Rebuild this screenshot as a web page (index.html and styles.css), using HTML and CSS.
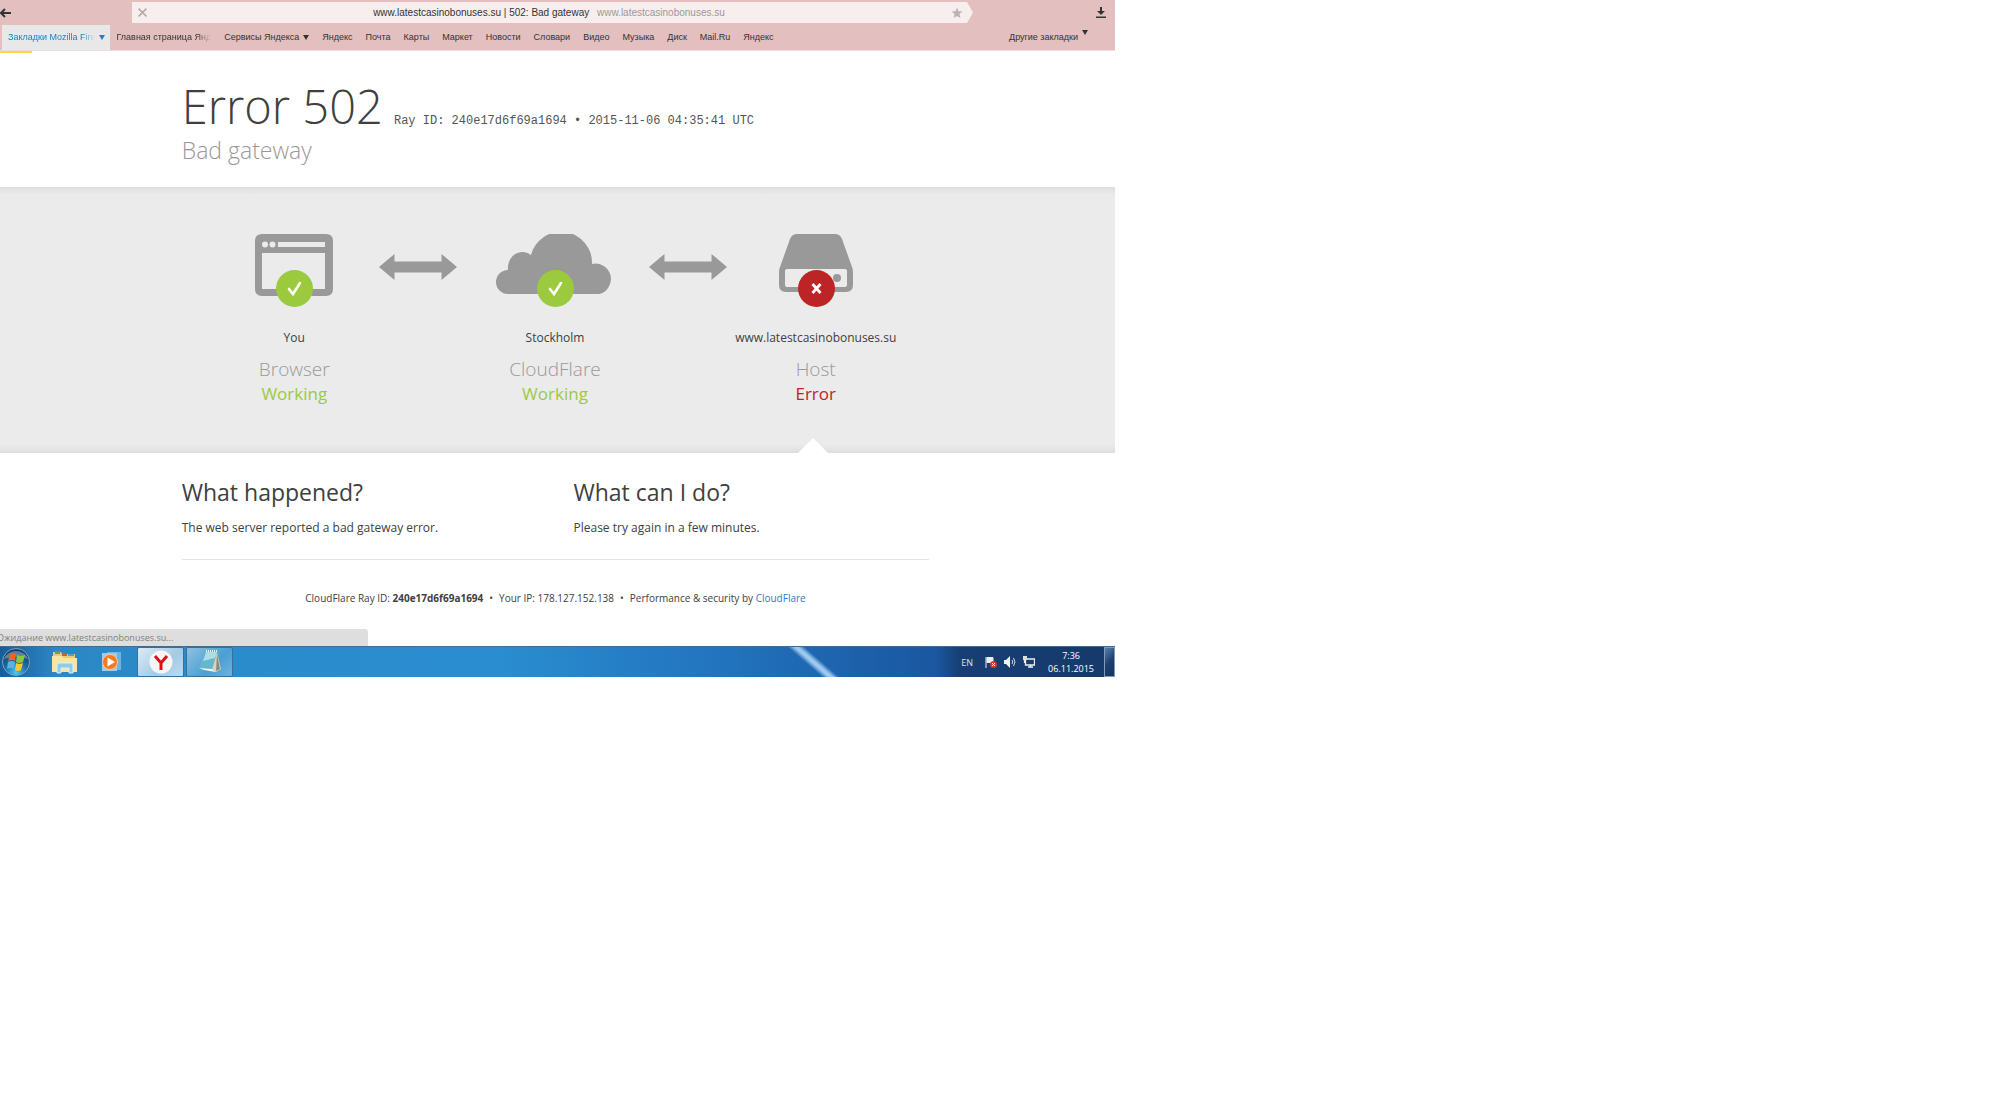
FILE: index.html
```
<!DOCTYPE html>
<html lang="en">

<head>
  <meta charset="UTF-8">
  <meta name="viewport" content="width=device-width, initial-scale=1.0">
  <title>www.latestcasinobonuses.su | 502: Bad gateway</title>
  <link rel="stylesheet" href="styles.css">
</head>

<body>
  <div class="screen">

    <header class="browser">
      <div class="toolbar">
        <button class="icon-button back" aria-label="Back">
          <svg width="12" height="10" viewBox="0 0 12 10"><path d="M5 1L1 5l4 4M1 5h10" fill="none" stroke="#333" stroke-width="2"/></svg>
        </button>
        <div class="address">
          <button class="icon-button" aria-label="Stop">
            <svg width="9" height="9" viewBox="0 0 8 8"><path d="M.5.5l7 7M7.500.5l-7 7" fill="none" stroke="#b3adad" stroke-width="1.500"/></svg>
          </button>
          <p class="address-text">www.latestcasinobonuses.su | 502: Bad gateway <span>www.latestcasinobonuses.su</span></p>
          <button class="icon-button" aria-label="Bookmark">
            <svg width="12" height="12" viewBox="0 0 12 12"><path d="M6 .5l1.500 3.800 4 .2-3.100 2.600 1 4L6 8.900l-3.400 2.200 1-4L.5 4.500l4-.2z" fill="#b9b3b3"/></svg>
          </button>
        </div>
        <button class="icon-button" aria-label="Downloads">
          <svg width="10" height="12" viewBox="0 0 10 12"><path d="M4 0h2v4h3L5 8 1 4h3zM0 9.500h10V11H0z" fill="#333"/></svg>
        </button>
      </div>
      <nav class="bookmarks">
        <a class="bookmark active" href="#"><span class="cut">Закладки Mozilla Fire</span><i class="caret"></i></a>
        <a class="bookmark" href="#"><span class="cut">Главная страница Янд</span></a>
        <a class="bookmark" href="#">Сервисы Яндекса<i class="caret"></i></a>
        <a class="bookmark" href="#">Яндекс</a>
        <a class="bookmark" href="#">Почта</a>
        <a class="bookmark" href="#">Карты</a>
        <a class="bookmark" href="#">Маркет</a>
        <a class="bookmark" href="#">Новости</a>
        <a class="bookmark" href="#">Словари</a>
        <a class="bookmark" href="#">Видео</a>
        <a class="bookmark" href="#">Музыка</a>
        <a class="bookmark" href="#">Диск</a>
        <a class="bookmark" href="#">Mail.Ru</a>
        <a class="bookmark" href="#">Яндекс</a>
        <a class="bookmark other" href="#">Другие закладки<i class="caret"></i></a>
      </nav>
    </header>

    <main class="page">
      <div class="progress"></div>
      <div class="wrapper title">
        <h1>Error 502</h1>
        <span class="ray">Ray ID: 240e17d6f69a1694 &bull; 2015-11-06 04:35:41 UTC</span>
        <h2>Bad gateway</h2>
      </div>

      <section class="status">
        <div class="status-grid">
          <div class="status-item">
            <div class="figure">
              <svg width="78" height="62" viewBox="0 0 78 62">
                <path fill="#999" fill-rule="evenodd" d="M7 0h64q7 0 7 7v48q0 7-7 7H7q-7 0-7-7V7q0-7 7-7zM7 19v36h63V19zM23 8v5h47V8z"/>
                <circle cx="10" cy="10.500" r="3" fill="#ebebeb"/>
                <circle cx="17.500" cy="10.500" r="3" fill="#ebebeb"/>
              </svg>
              <svg class="badge" width="37" height="37" viewBox="0 0 37 37"><circle cx="18.500" cy="18.500" r="18.500" fill="#9bca3e"/><path d="M13 19l4 5 7-11" fill="none" stroke="#fff" stroke-width="2.600" stroke-linecap="round"/></svg>
            </div>
            <span class="where">You</span>
            <h3>Browser</h3>
            <span class="state ok">Working</span>
          </div>

          <div class="status-item">
            <svg class="arrow" width="78" height="26" viewBox="0 0 78 26"><path d="M0 13L15.500 0v7.500h47V0L78 13 62.500 26v-7.500h-47V26z" fill="#999"/></svg>
            <div class="figure">
              <svg width="118" height="60" viewBox="0 0 118 60"><path d="M12 60a12 12 0 0 1 0-24q-.5-4 1-8a14 14 0 0 1 22-7A31 31 0 0 1 96 30a15.200 15.200 0 1 1 7 30z" fill="#999"/></svg>
              <svg class="badge" width="37" height="37" viewBox="0 0 37 37"><circle cx="18.500" cy="18.500" r="18.500" fill="#9bca3e"/><path d="M13 19l4 5 7-11" fill="none" stroke="#fff" stroke-width="2.600" stroke-linecap="round"/></svg>
            </div>
            <span class="where">Stockholm</span>
            <h3>CloudFlare</h3>
            <span class="state ok">Working</span>
          </div>

          <div class="status-item">
            <svg class="arrow arrow-host" width="78" height="26" viewBox="0 0 78 26"><path d="M0 13L15.500 0v7.500h47V0L78 13 62.500 26v-7.500h-47V26z" fill="#999"/></svg>
            <div class="figure">
              <svg width="74" height="58" viewBox="0 0 74 58">
                <path fill="#999" fill-rule="evenodd" d="M18 0h38q5 0 7 5l10 28q1 2 1 5v13q0 7-7 7H7q-7 0-7-7V38q0-3 1-5L11 5q2-5 7-5zM8 35q-2 0-2 2v14q0 2 2 2h58q2 0 2-2V37q0-2-2-2z"/>
                <circle cx="58" cy="44" r="4" fill="#999"/>
              </svg>
              <svg class="badge" width="37" height="37" viewBox="0 0 37 37"><circle cx="18.500" cy="18.500" r="18.500" fill="#bd2426"/><path d="M14.500 14l8 9M22.500 14l-8 9" fill="none" stroke="#fff" stroke-width="2.800"/></svg>
            </div>
            <span class="where">www.latestcasinobonuses.su</span>
            <h3>Host</h3>
            <span class="state error">Error</span>
            <div class="notch"></div>
          </div>
        </div>
      </section>

      <div class="wrapper">
        <div class="columns">
          <section>
            <h2>What happened?</h2>
            <p>The web server reported a bad gateway error.</p>
          </section>
          <section>
            <h2>What can I do?</h2>
            <p>Please try again in a few minutes.</p>
          </section>
        </div>
        <footer class="footer">
          <span>CloudFlare Ray ID: <strong>240e17d6f69a1694</strong></span>
          <span>&bull;</span>
          <span>Your IP: 178.127.152.138</span>
          <span>&bull;</span>
          <span>Performance &amp; security by <a href="#">CloudFlare</a></span>
        </footer>
      </div>
      <div class="loading"><span>Ожидание www.latestcasinobonuses.su...</span></div>
    </main>

    <div class="taskbar">
      <button class="start" aria-label="Start">
        <svg width="30" height="30" viewBox="0 0 30 30">
          <defs><radialGradient id="orb" cx=".5" cy=".9" r=".8"><stop offset="0" stop-color="#3fd0f5"/><stop offset=".5" stop-color="#1b6fae"/><stop offset="1" stop-color="#123f6d"/></radialGradient></defs>
          <circle cx="15" cy="15" r="13.500" fill="url(#orb)" stroke="#7fa3bd"/>
          <path d="M3 12a12.500 11 0 0 1 24 0q-12-5-24 0z" fill="#fff" opacity=".3"/>
          <path d="M9 7q3-2 6 0l-1 7q-3-2-7 0z" fill="#e9652b"/>
          <path d="M16 8q3 2 8 0l-2 7q-4 2-7 0z" fill="#8dc63f"/>
          <path d="M7 15q3-2 7 0l-1 7q-3-2-7 0z" fill="#54b4ea"/>
          <path d="M15 16q3 2 7 0l-2 7q-3 2-6 0z" fill="#fbc62e"/>
        </svg>
      </button>
      <button class="task" aria-label="Explorer">
        <svg width="26" height="24" viewBox="0 0 26 24">
          <path d="M1 2h8l1 2h13v18H1z" fill="#e8cd73"/>
          <path d="M3 1h5v3H3z" fill="#4cae4f"/><path d="M10 3h5v3h-5z" fill="#d65545"/><path d="M16 4h6v2h-6z" fill="#4aa2dc"/>
          <path d="M0 6h10l1 2h14v14H0z" fill="#f7e6a1"/>
          <path d="M5 23v-8q0-2 2-2h12q2 0 2 2v8h-4v-5H9v5z" fill="#8fcbed" stroke="#d9f0fc"/>
        </svg>
      </button>
      <button class="task" aria-label="Media Player">
        <svg width="22" height="22" viewBox="0 0 22 22">
          <path d="M6 1h14v18H6z" fill="#6fb4de"/><path d="M1 2h15v18H1z" fill="#9fcbe8"/>
          <circle cx="9" cy="11" r="7.500" fill="#f47b20" stroke="#f9c396"/><path d="M6.500 6.500L14 11l-7.500 4.500z" fill="#fff"/>
        </svg>
      </button>
      <button class="task open current" aria-label="Yandex">
        <svg width="24" height="24" viewBox="0 0 24 24"><circle cx="12" cy="12" r="11.500" fill="#f5f5f5"/><path d="M6 6l6 7 6-7M12 12v8" fill="none" stroke="#d3151b" stroke-width="3"/></svg>
      </button>
      <button class="task open" aria-label="Notepad">
        <svg width="24" height="24" viewBox="0 0 24 24">
          <path d="M19 2l4 17-5 3-4-3z" fill="#d9d2bd"/><path d="M19 4l3 15-4 2z" fill="#8a8a7c"/>
          <path d="M8 2h11l-5 17-13-1z" fill="#65b7ca"/><path d="M8 2h11l-2 6-12 3z" fill="#a9dfe6"/>
          <path d="M8 1h11" stroke="#e8f4f6" stroke-width="2" stroke-dasharray="1 1"/>
          <path d="M1 18l13 1 4 3-12-2z" fill="#f1f5f3"/>
        </svg>
      </button>
      <div class="tray">
        <span class="lang">EN</span>
        <svg width="12" height="12" viewBox="0 0 12 12"><path d="M1 1v11M2 1.500h6v5H2z" fill="#eee" stroke="#eee"/><circle cx="8.500" cy="8.500" r="3.500" fill="#d8372c"/><path d="M7 7l3 3M10 7l-3 3" stroke="#fff"/></svg>
        <svg width="12" height="12" viewBox="0 0 12 12"><path d="M0 4h2l4-4v12L2 8H0z" fill="#f2f2f2"/><path d="M8 4q1.500 2 0 4M9.500 2q3 4 0 8" fill="none" stroke="#ccd9e8"/></svg>
        <svg width="12" height="12" viewBox="0 0 12 12"><path d="M2.500 3v6h9V3zM5 11h5M7.500 9v2M1.500 3v4" fill="none" stroke="#eee" stroke-width="1.300"/><path d="M0 0h4v4H0z" fill="#ddd"/></svg>
        <div class="clock"><span>7:36</span><span>06.11.2015</span></div>
      </div>
      <button class="show-desktop" aria-label="Show desktop"></button>
    </div>

  </div>
</body>

</html>
```

FILE: styles.css
```
* {
  box-sizing: border-box;
}

body {
  background-color: #fff;
  color: #404040;
  font: 12px/16px "Open Sans", "Noto Sans", sans-serif;
  margin: 0;
}

h1, h2, h3, p {
  font-weight: 400;
  margin: 0;
}

a {
  color: #2f7bbf;
  text-decoration: none;
}

button {
  background: none;
  border: 0;
  padding: 0;
}

svg {
  display: block;
}

.screen {
  max-width: 1115px;
}

/* browser chrome */
.browser {
  background-color: #e4bfc0;
  border-bottom: 1px solid #efdcdc;
  font: 10px/20px "Liberation Sans", Arial, sans-serif;
}

.toolbar {
  align-items: center;
  display: flex;
  padding: 2px 9px 2px 0;
}

.back {
  margin-right: 120px;
}

.address {
  align-items: center;
  background-color: #f8eeee;
  clip-path: polygon(0 0, calc(100% - 6px) 0, 100% 50%, calc(100% - 6px) 100%, 0 100%);
  display: flex;
  flex: 1;
  height: 21px;
  margin-right: 123px;
  padding: 0 10px 0 6px;
}

.address-text {
  color: #333;
  flex: 1;
  text-align: center;
}

.address-text span {
  color: #999;
  margin-left: 5px;
}

.bookmarks {
  display: flex;
  font-size: 9px;
  gap: 13px;
  height: 25px;
  line-height: 25px;
  padding-left: 2px;
}

.bookmark {
  align-items: center;
  color: #333;
  display: flex;
  white-space: nowrap;
}

.bookmark.active {
  background-color: #e8e8e8;
  color: #1484c2;
  margin-right: -7px;
  padding: 0 5px 0 6px;
}

.cut {
  -webkit-mask-image: linear-gradient(to right, #000 85%, transparent);
  mask-image: linear-gradient(to right, #000 85%, transparent);
}

.caret {
  border: 3px solid transparent;
  border-bottom-width: 0;
  border-top: 5px solid currentColor;
  margin-left: 4px;
}

.other {
  margin-left: auto;
  padding-right: 27px;
}

.other .caret {
  margin-bottom: 11px;
}

/* error page */
.progress {
  background-color: #ffd54a;
  height: 2px;
  width: 32px;
}

.wrapper {
  margin: 0 auto;
  padding-right: 4px;
  width: 67.4%;
}

.title {
  height: 134px;
  padding-top: 22px;
}

.title h1 {
  display: inline-block;
  font-size: 47px;
  font-weight: 300;
  line-height: 62px;
  margin-right: 8px;
}

.title h2 {
  color: #999;
  font-size: 23px;
  font-weight: 300;
  line-height: 26px;
}

.ray {
  color: #555;
  font: 12px/16px "Liberation Mono", "Courier New", monospace;
}

.status {
  background: linear-gradient(#dedede, #ebebeb 8px, #ebebeb 257px, #dedede);
  height: 266px;
  padding-top: 47px;
}

.status-grid {
  display: grid;
  grid-template-columns: repeat(3, 1fr);
  margin: 0 auto;
  padding-right: 5px;
  width: 70.6%;
}

.status-item {
  height: 219px;
  position: relative;
  text-align: center;
}

.figure {
  display: flex;
  height: 96px;
  justify-content: center;
  position: relative;
}

.badge {
  left: calc(50% - 18px);
  position: absolute;
  top: 36px;
}

.arrow {
  left: -46px;
  position: absolute;
  top: 20px;
}

.arrow-host {
  left: -36px;
}

.where {
  display: block;
  margin-bottom: 11px;
}

.status-item h3 {
  color: #999;
  font-size: 19px;
  font-weight: 300;
  line-height: 24px;
}

.state {
  display: block;
  font-size: 17px;
  line-height: 26px;
}

.ok {
  color: #9bca3e;
}

.error {
  color: #bd2426;
}

.notch {
  border: 15px solid transparent;
  border-bottom-color: #fff;
  border-top: 0;
  bottom: 0;
  left: calc(50% - 18px);
  position: absolute;
}

.columns {
  border-bottom: 1px solid #e4e4e4;
  display: grid;
  gap: 36px;
  grid-template-columns: 1fr 1fr;
  height: 107px;
  padding-top: 23px;
}

.columns h2 {
  font-size: 23px;
  line-height: 32px;
  margin-bottom: 12px;
}

.footer {
  display: flex;
  font-size: 10px;
  gap: 6px;
  height: 69px;
  justify-content: center;
  padding-top: 30px;
}

.loading {
  background-color: #dedede;
  border-top-right-radius: 3px;
  color: #808080;
  font-size: 9px;
  height: 17px;
  line-height: 18px;
  width: 33%;
}

.loading span {
  margin-left: -3px;
}

/* windows taskbar */
.taskbar {
  align-items: center;
  background:
    linear-gradient(41deg, transparent 41%, #9cc8f0 48%, #9cc8f0 52%, transparent 59%) 74.3% 0 / 60px 31px no-repeat,
    linear-gradient(to right, #185d97, #2c87c4 5%, #2b8ccb 20%, #2a8dd0 45%, #2273bd 65%, #1c5ca6 80%, #1b57a0 84%, #173f75 86%, #153a6a);
  border-top: 1px solid #3f6c92;
  display: flex;
  height: 31px;
}

.start {
  margin-right: 10px;
  padding-left: 1px;
}

.task {
  align-items: center;
  display: flex;
  height: 30px;
  justify-content: center;
  width: 47px;
}

.open {
  background: linear-gradient(135deg, #8fc0e0, #4a9fd3 60%, #6db4de);
  border: 1px solid #3b6f96;
  border-radius: 2px;
  margin-left: 2px;
}

.current {
  background: linear-gradient(135deg, #dcebf5, #a4cae4 60%, #bedbef);
}

.tray {
  align-items: center;
  color: #fff;
  display: flex;
  font: 9px/13px "Open Sans", "Noto Sans", sans-serif;
  gap: 7px;
  margin-left: auto;
}

.lang {
  color: #d5e2f0;
  margin-right: 5px;
}

.clock {
  display: flex;
  flex-direction: column;
  margin: 0 10px 0 6px;
  text-align: center;
}

.show-desktop {
  background: linear-gradient(135deg, #5b7fa8, #1d4070 50%, #16345f);
  border: 1px solid #7f9bb9;
  height: 30px;
  width: 11px;
}
```
